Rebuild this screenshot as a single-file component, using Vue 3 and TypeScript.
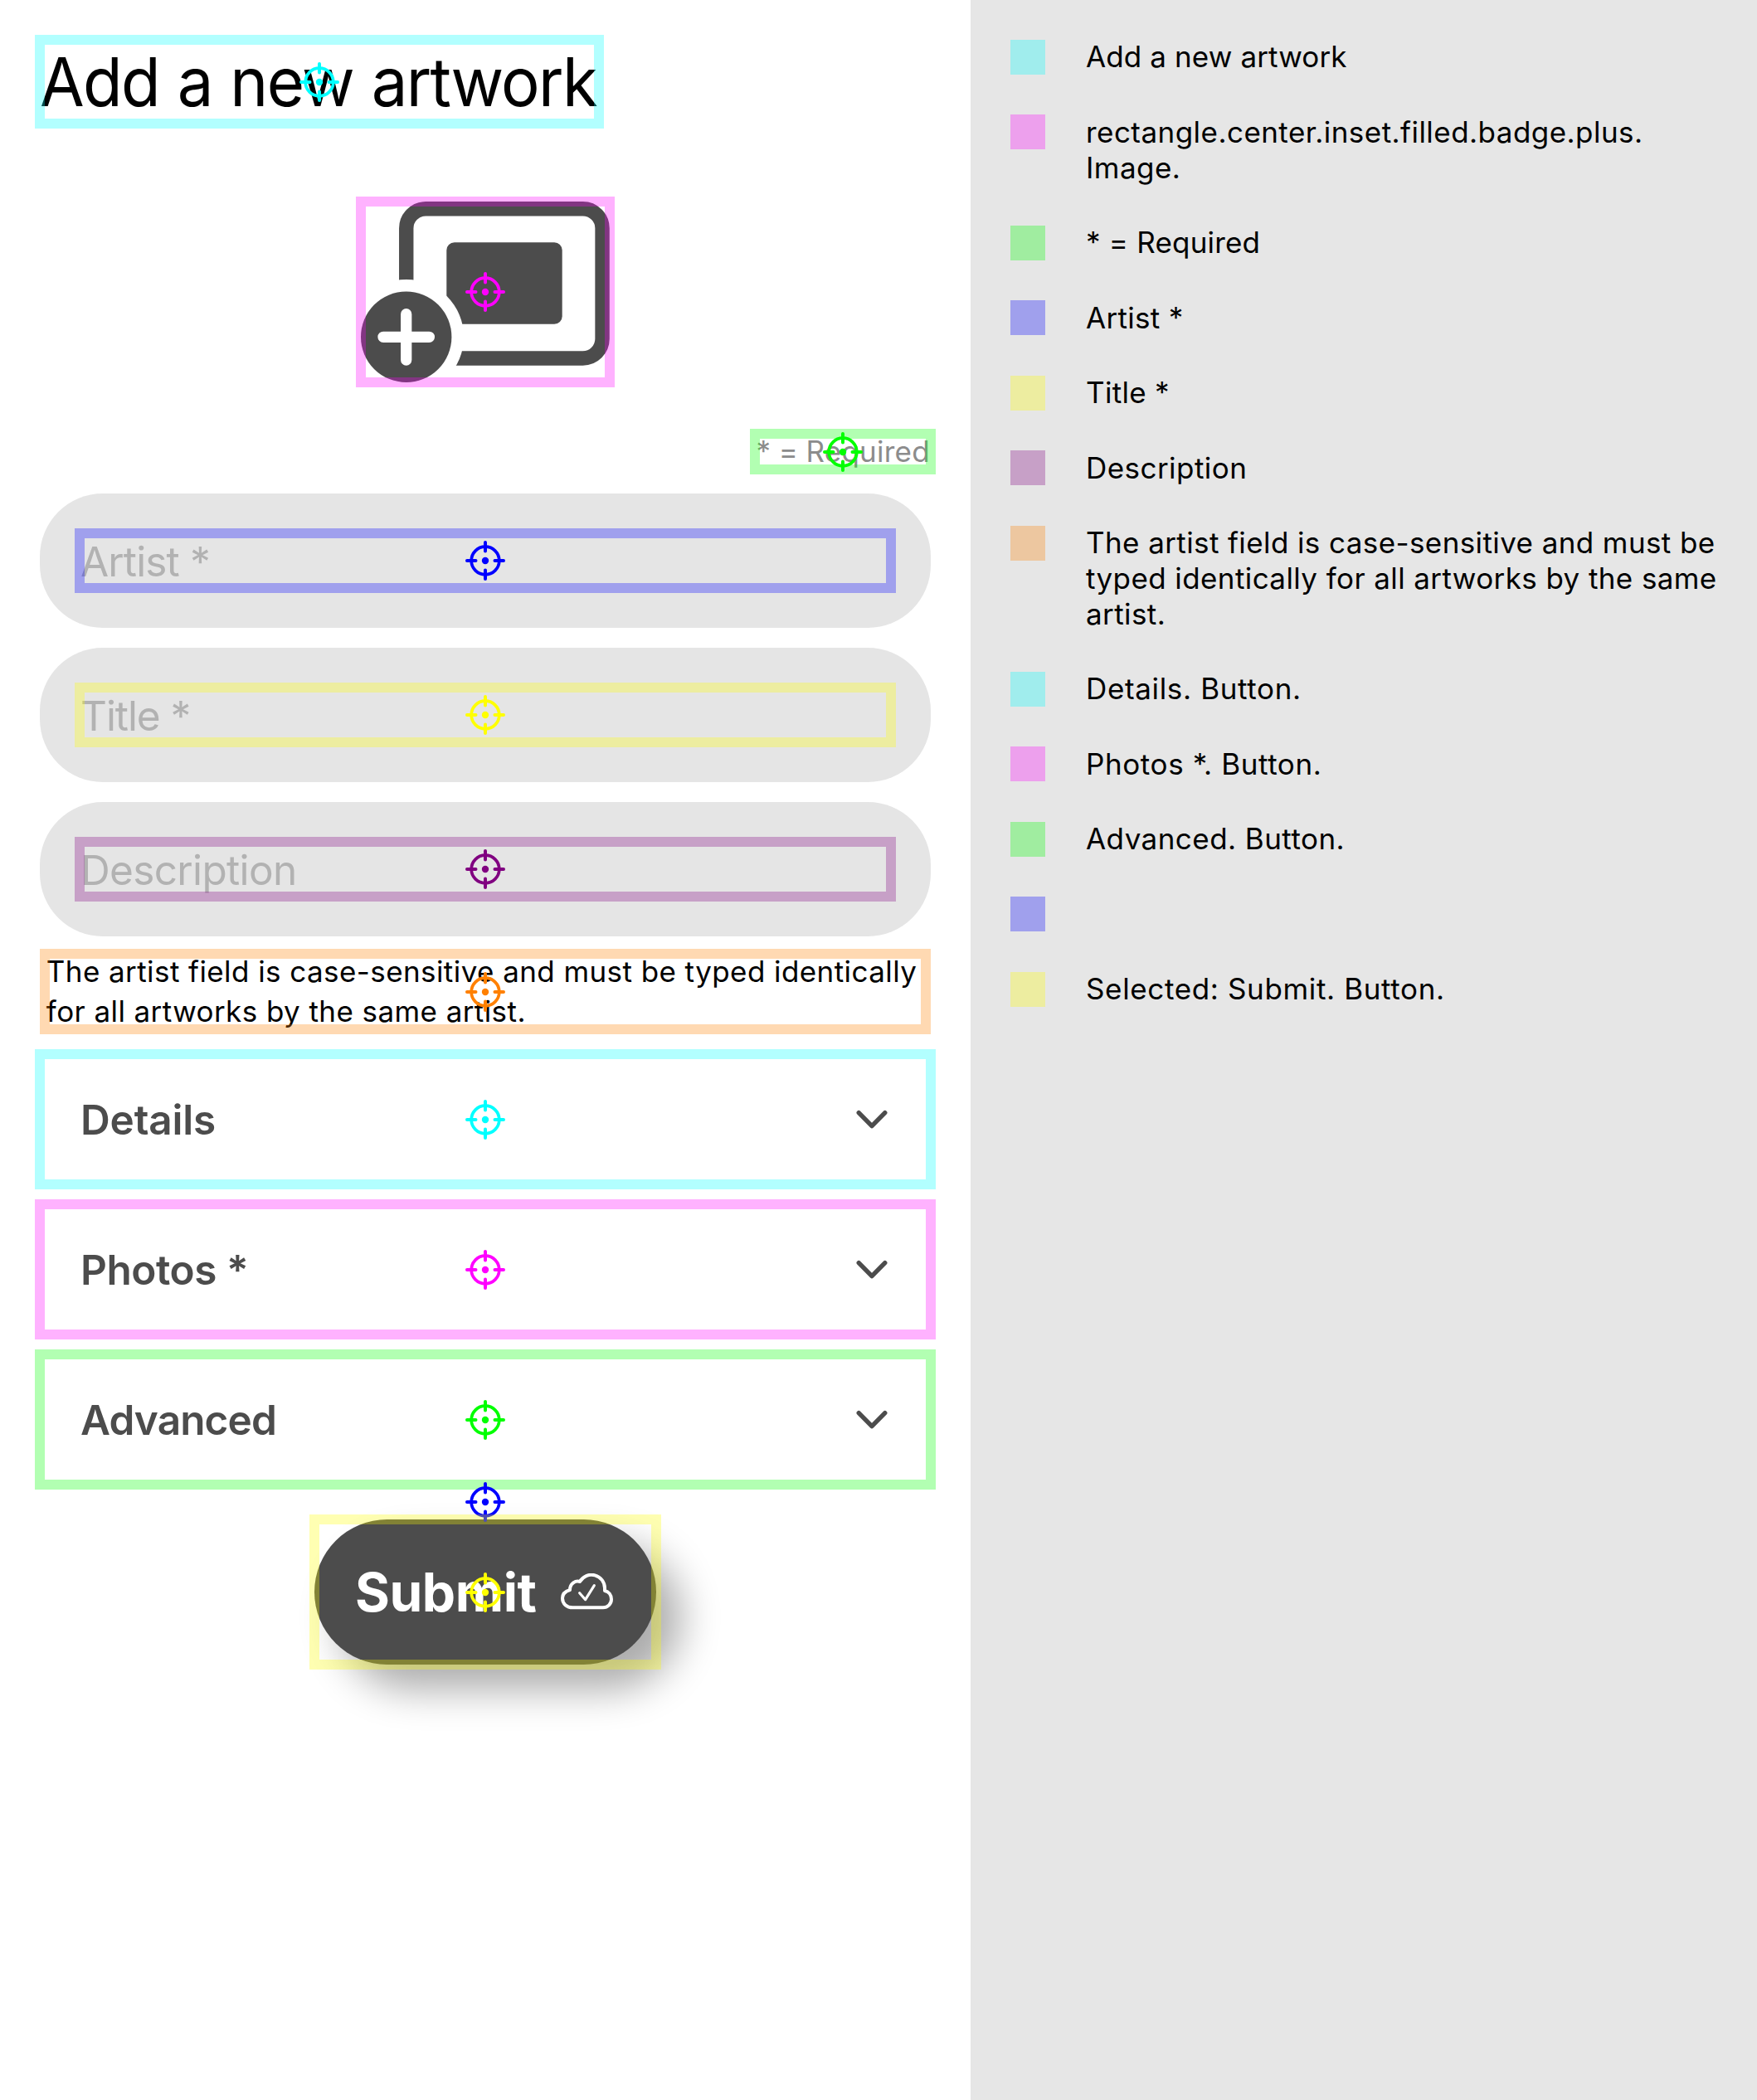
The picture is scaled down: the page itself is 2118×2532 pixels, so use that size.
<script setup lang="ts">
type Tone = 'cyan' | 'magenta' | 'green' | 'blue' | 'yellow' | 'purple' | 'orange'

interface Field { label: string; tone: Tone; tracking: number }
interface LegendItem { lines: string[]; tone: Tone; tracking: number }

const fields: Field[] = [
  { label: 'Artist *', tone: 'blue', tracking: -0.86 },
  { label: 'Title *', tone: 'yellow', tracking: -1.07 },
  { label: 'Description', tone: 'purple', tracking: -0.66 },
]

const sections: Field[] = [
  { label: 'Details', tone: 'cyan', tracking: -0.18 },
  { label: 'Photos *', tone: 'magenta', tracking: -0.45 },
  { label: 'Advanced', tone: 'green', tracking: -0.86 },
]

const hint = [
  'The artist field is case-sensitive and must be typed identically',
  'for all artworks by the same artist.',
]

const legend: LegendItem[] = [
  { lines: ['Add a new artwork'], tone: 'cyan', tracking: 0.12 },
  { lines: ['rectangle.center.inset.filled.badge.plus.', 'Image.'], tone: 'magenta', tracking: 0.455 },
  { lines: ['* = Required'], tone: 'green', tracking: 0.2 },
  { lines: ['Artist *'], tone: 'blue', tracking: 0.3 },
  { lines: ['Title *'], tone: 'yellow', tracking: 0.3 },
  { lines: ['Description'], tone: 'purple', tracking: 0.45 },
  {
    lines: [
      'The artist field is case-sensitive and must be',
      'typed identically for all artworks by the same',
      'artist.',
    ],
    tone: 'orange',
    tracking: 0.4,
  },
  { lines: ['Details. Button.'], tone: 'cyan', tracking: 0.65 },
  { lines: ['Photos *. Button.'], tone: 'magenta', tracking: 0.6 },
  { lines: ['Advanced. Button.'], tone: 'green', tracking: 0.45 },
  { lines: [], tone: 'blue', tracking: 0 },
  { lines: ['Selected: Submit. Button.'], tone: 'yellow', tracking: 0.64 },
]
</script>

<template>
  <div class="page">
    <svg class="defs" width="0" height="0" aria-hidden="true">
      <symbol id="target" viewBox="-24 -24 48 48">
        <g fill="none" stroke="currentColor">
          <circle r="16.8" stroke-width="3.7" />
          <path d="M0-22V-11.5M0 22V11.5M-22 0H-11.5M22 0H11.5" stroke-width="4" stroke-linecap="round" />
        </g>
        <circle r="4.2" fill="currentColor" />
      </symbol>
    </svg>

    <main class="form">
      <div class="node title cyan">
        <h1>Add a new artwork</h1>
        <span class="frame"><svg class="target"><use href="#target" /></svg></span>
      </div>

      <div class="node picture magenta">
        <svg width="300" height="218" viewBox="435 243 300 218">
          <defs>
            <mask id="badge-gap" maskUnits="userSpaceOnUse" x="435" y="243" width="300" height="218">
              <rect x="435" y="243" width="300" height="218" fill="#fff" />
              <circle cx="489.7" cy="406.3" r="69.4" fill="#000" />
            </mask>
          </defs>
          <g mask="url(#badge-gap)">
            <rect x="489.75" y="251.7" width="236.3" height="180.3" rx="23.5" fill="none" stroke="#4c4c4c" stroke-width="17.4" />
            <rect x="538.3" y="292.3" width="139.4" height="98.5" rx="9.5" fill="#4c4c4c" />
          </g>
          <circle cx="489.7" cy="406.3" r="54.7" fill="#4c4c4c" />
          <path d="M489.7 378.7V434M462 406.3H517.4" stroke="#fff" stroke-width="13.3" stroke-linecap="round" />
        </svg>
        <span class="frame"><svg class="target"><use href="#target" /></svg></span>
      </div>

      <div class="node required green">
        <span>* = Required</span>
        <span class="frame"><svg class="target"><use href="#target" /></svg></span>
      </div>

      <div class="fields">
        <div v-for="f in fields" :key="f.label" class="field">
          <div class="node input" :class="f.tone">
            <span :style="{ letterSpacing: f.tracking + 'px' }">{{ f.label }}</span>
            <span class="frame"><svg class="target"><use href="#target" /></svg></span>
          </div>
        </div>
      </div>

      <div class="node hint orange">
        <p><span v-for="line in hint" :key="line">{{ line }}</span></p>
        <span class="frame"><svg class="target"><use href="#target" /></svg></span>
      </div>

      <div class="sections">
        <div v-for="s in sections" :key="s.label" class="node section" :class="s.tone">
          <span :style="{ letterSpacing: s.tracking + 'px' }">{{ s.label }}</span>
          <svg width="38" height="24" viewBox="0 0 38 24">
            <path d="M3.2 3.6L19 19.6L34.8 3.6" fill="none" stroke="#4c4c4c" stroke-width="5.4" stroke-linecap="round" stroke-linejoin="round" />
          </svg>
          <span class="frame"><svg class="target"><use href="#target" /></svg></span>
        </div>
      </div>

      <div class="node spacer blue">
        <span class="frame bare"><svg class="target"><use href="#target" /></svg></span>
      </div>

      <div class="node submit yellow">
        <button type="button">
          <span>Submit</span>
          <svg width="63" height="44.4" viewBox="978 383 189 133" fill="none" stroke="#fff" stroke-linecap="round" stroke-linejoin="round">
            <path stroke-width="12" d="M1021 507H1131A30 30 0 0 0 1161 477C1161 461 1151 449 1137 446V437A48 48 0 0 0 1047 413C1032 408 1011 419 1011 443C994 448 984 458 984 473C984 493 1000 507 1021 507Z" />
            <path stroke-width="9.5" d="M1046 454L1067 478L1099 427" />
          </svg>
        </button>
        <span class="frame"><svg class="target"><use href="#target" /></svg></span>
      </div>
    </main>

    <aside class="legend">
      <div v-for="(item, i) in legend" :key="i" class="item">
        <i class="swatch" :class="item.tone"></i>
        <p :style="{ letterSpacing: item.tracking + 'px' }">
          <span v-for="line in item.lines" :key="line">{{ line }}</span>
        </p>
      </div>
    </aside>
  </div>
</template>

<style>
body {
  margin: 0;
  background: #fff;
}
</style>

<style scoped>
.page {
  display: flex;
  width: 2118px;
  height: 2532px;
  font-family: Inter, 'Liberation Sans', sans-serif;
  color: #000;
  overflow: hidden;
}
.defs {
  position: absolute;
}

.cyan { --c: 0 255 255; }
.magenta { --c: 255 0 255; }
.green { --c: 0 255 0; }
.blue { --c: 0 0 255; }
.yellow { --c: 255 255 0; }
.purple { --c: 128 0 128; }
.orange { --c: 255 128 0; }

.form {
  box-sizing: border-box;
  width: 1170px;
  padding: 48px;
  display: flex;
  flex-direction: column;
  align-items: center;
}
.node {
  position: relative;
}
.frame {
  position: absolute;
  z-index: 1;
  inset: -6px;
  border: 12px solid rgb(var(--c) / 0.3);
  display: flex;
  align-items: center;
  justify-content: center;
}
.frame.bare {
  border-color: transparent;
}
.target {
  flex: none;
  width: 48px;
  height: 48px;
  margin: -24px;
  color: rgb(var(--c));
  overflow: visible;
}

.title {
  align-self: flex-start;
  width: 674px;
  height: 101px;
}
.title h1 {
  margin: 0;
  font-size: 81.5px;
  font-weight: 400;
  line-height: 101px;
  letter-spacing: -1.75px;
  word-spacing: 1.5px;
  white-space: nowrap;
  transform: scaleX(0.955);
  transform-origin: 0 0;
}
.picture {
  width: 300px;
  height: 218px;
  margin-top: 94px;
}
.picture > svg {
  display: block;
}
.required {
  align-self: flex-end;
  box-sizing: border-box;
  width: 212px;
  height: 43px;
  margin-top: 62px;
  padding-left: 1.5px;
  font-size: 35px;
  line-height: 43px;
  letter-spacing: 0.25px;
  word-spacing: -0.7px;
  color: #8c8c8c;
  white-space: nowrap;
}

.fields {
  width: 100%;
  margin-top: 29px;
  display: flex;
  flex-direction: column;
  gap: 24px;
}
.field {
  padding: 48px;
  border-radius: 76px;
  background: #e5e5e5;
}
.input {
  height: 66px;
  line-height: 69px;
  font-size: 49.5px;
  color: #b2b2b2;
  padding-left: 1px;
}

.hint {
  width: 1061.2px;
  height: 91px;
  margin-top: 21px;
  display: flex;
  align-items: center;
}
.hint p {
  margin: -2px 0 0;
  padding-left: 1.4px;
  font-size: 35px;
  line-height: 48px;
  letter-spacing: 0.42px;
  white-space: nowrap;
}
.hint p span,
.item p span {
  display: block;
}

.sections {
  width: 100%;
  margin-top: 30px;
  display: flex;
  flex-direction: column;
  gap: 24px;
}
.section {
  box-sizing: border-box;
  height: 157px;
  padding: 0 52px 0 49px;
  display: flex;
  align-items: center;
  justify-content: space-between;
  font-size: 49.5px;
  font-weight: 600;
  color: #4c4c4c;
}

.spacer {
  width: 100%;
  height: 42px;
}
.submit {
  width: 412px;
}
.submit button {
  box-sizing: border-box;
  width: 412px;
  height: 175px;
  padding: 0 52px 0 49px;
  border: 0;
  border-radius: 87.5px;
  background: #4c4c4c;
  box-shadow: 30px 30px 48px rgb(0 0 0 / 0.33);
  display: flex;
  align-items: center;
  justify-content: space-between;
  font: 700 64px Inter, 'Liberation Sans', sans-serif;
  letter-spacing: -0.45px;
  color: #fff;
}

.legend {
  box-sizing: border-box;
  width: 948px;
  padding: 48px;
  background: #e6e6e6;
  display: flex;
  flex-direction: column;
  gap: 47.7px;
}
.item {
  display: flex;
  gap: 49px;
  min-height: 42.8px;
}
.swatch {
  flex: none;
  width: 42px;
  height: 42px;
  background: rgb(var(--c) / 0.3);
}
.item p {
  margin: -0.6px 0 0.6px;
  font-size: 35px;
  line-height: 42.8px;
  white-space: nowrap;
}
</style>
